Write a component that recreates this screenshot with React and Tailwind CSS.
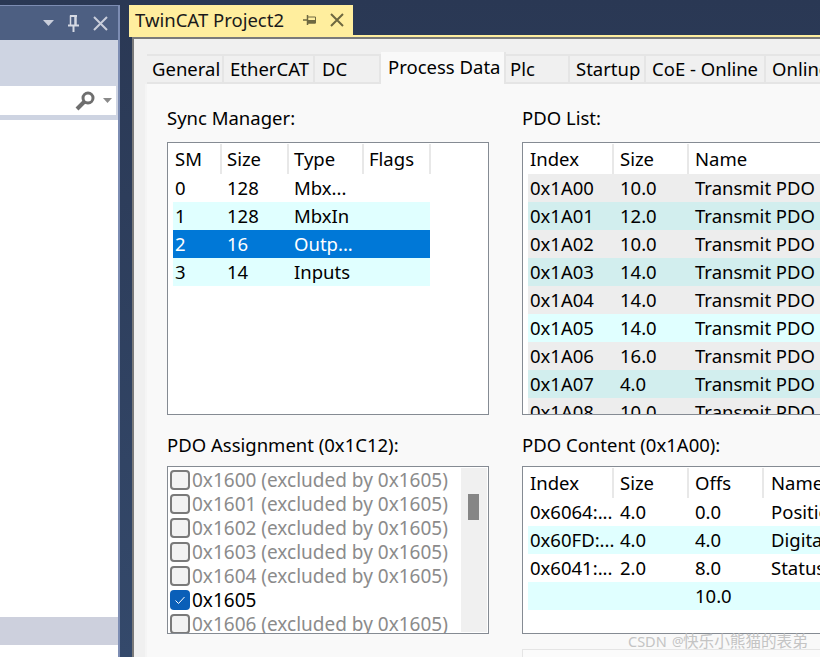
import React from 'react';

const font = { fontFamily: '"Noto Sans", "Noto Sans CJK SC", sans-serif' };

const tabs = [
  { label: 'General', width: 'w-[77px]', pad: 'pl-[5px]' },
  { label: 'EtherCAT', width: 'w-[91px]', pad: 'pl-[6px]' },
  { label: 'DC', width: 'w-[66px]', pad: 'pl-[7px]' },
  { label: 'Process Data', width: 'w-[125px]', pad: 'pl-[7px]', active: true },
  { label: 'Plc', width: 'w-[64px]', pad: 'pl-[4px]' },
  { label: 'Startup', width: 'w-[76px]', pad: 'pl-[6px]' },
  { label: 'CoE - Online', width: 'w-[120px]', pad: 'pl-[6px]' },
  { label: 'Online', width: 'w-[70px]', pad: 'pl-[6px]' },
];

const smRows = [
  ['0', '128', 'Mbx...', ''],
  ['1', '128', 'MbxIn', 'bg-[#e0ffff]'],
  ['2', '16', 'Outp...', 'bg-[#0078d7] text-white'],
  ['3', '14', 'Inputs', 'bg-[#e0ffff]'],
];

const pdoRows = [
  ['0x1A00', '10.0', 'bg-[#ededed]'],
  ['0x1A01', '12.0', 'bg-[#d2eeee]'],
  ['0x1A02', '10.0', 'bg-[#ededed]'],
  ['0x1A03', '14.0', 'bg-[#d2eeee]'],
  ['0x1A04', '14.0', 'bg-[#ededed]'],
  ['0x1A05', '14.0', 'bg-[#e0ffff]'],
  ['0x1A06', '16.0', 'bg-[#ededed]'],
  ['0x1A07', '4.0', 'bg-[#d2eeee]'],
  ['0x1A08', '10.0', 'bg-[#ededed]'],
];

const contentRows = [
  ['0x6064:...', '4.0', '0.0', 'Position', ''],
  ['0x60FD:...', '4.0', '4.0', 'Digital', 'bg-[#e0ffff]'],
  ['0x6041:...', '2.0', '8.0', 'Statusword', ''],
  ['', '', '10.0', '', 'bg-[#e0ffff]'],
];

const assignRows = ['0x1600', '0x1601', '0x1602', '0x1603', '0x1604', '0x1605', '0x1606'];

function Head({ label, width, pad = 'pl-[5px]', last }) {
  return (
    <div className={`${width} ${pad} h-[30px] shrink-0 flex items-center ${last ? '' : 'border-r-2 border-[#e8e8e8]'}`}>
      {label}
    </div>
  );
}

function Cell({ width, children, pad = 'pl-[5px]' }) {
  return <div className={`${width} ${pad} shrink-0 whitespace-nowrap overflow-hidden`}>{children}</div>;
}

function Checkbox({ checked }) {
  if (checked) {
    return (
      <div className="w-[20px] h-[20px] shrink-0 rounded-[4px] bg-[#0a5fb8] flex items-center justify-center">
        <svg width="12" height="12" viewBox="0 0 12 12" fill="none" stroke="#ffffff" strokeWidth="1">
          <path d="M1.5 6.5 L4.5 9.5 L10.5 3" />
        </svg>
      </div>
    );
  }
  return <div className="w-[20px] h-[20px] shrink-0 rounded-[4px] border-2 border-[#7a7a7a] bg-[#f2f2f2]" />;
}

function TitleIcons() {
  return (
    <div className="flex items-center h-full">
      <svg className="ml-[43px]" width="11" height="6" viewBox="0 0 11 6"><path d="M0 0 H11 L5.5 6 Z" fill="#c9cedb" /></svg>
      <svg className="ml-[14px]" width="11" height="17" viewBox="0 0 11 17" fill="none" stroke="#d5d9e3">
        <path d="M2.5 0.5 V10" strokeWidth="1.5" />
        <path d="M7.5 0.5 V10" strokeWidth="2.5" />
        <path d="M2 1 H9" strokeWidth="2" />
        <path d="M0 10.5 H11" strokeWidth="2" />
        <path d="M5.5 11 V17" strokeWidth="2" />
      </svg>
      <svg className="ml-[14px]" width="15" height="15" viewBox="0 0 15 15" fill="none" stroke="#c9cedb" strokeWidth="2">
        <path d="M1 1 L14 14 M14 1 L1 14" />
      </svg>
    </div>
  );
}

export default function App() {
  return (
    <div className="w-[820px] h-[657px] overflow-hidden flex bg-linear-to-b from-[#2a3854] to-[#34496b] text-[18.5px] leading-[28px] text-black relative" style={font}>
      {/* left tool window */}
      <div className="w-[120px] shrink-0 mt-[5px] flex flex-col border-r-2 border-[#7d8db3] bg-white">
        <div className="h-[35px] shrink-0 bg-[#4d5f82] border-t border-[#7d8db3]">
          <TitleIcons />
        </div>
        <div className="h-[46px] shrink-0 bg-[#ced4e2]" />
        <div className="h-[34px] shrink-0 bg-white border-b-[5px] border-r-2 border-[#ced4e2] flex items-center justify-end pr-[4px]">
          <svg width="20" height="20" viewBox="0 0 20 20" fill="none" stroke="#6e6e6e">
            <circle cx="13" cy="7" r="5" strokeWidth="3" />
            <path d="M9.5 10.5 L2 18" strokeWidth="4" />
          </svg>
          <svg className="ml-[8px]" width="9" height="5" viewBox="0 0 9 5"><path d="M0 0 H9 L4.5 5 Z" fill="#8a8a8a" /></svg>
        </div>
        <div className="h-[497px] shrink-0 bg-white" />
        <div className="h-[28px] shrink-0 bg-[#cdd0dd]" />
        <div className="flex-1 bg-white" />
      </div>

      {/* document well */}
      <div className="flex-1 min-w-0 ml-[9px] flex flex-col pt-[5px]">
        <div className="h-[30px] w-[224px] shrink-0 bg-[#ffee9e] flex items-center pl-[6px] text-[#1a1a1a] whitespace-nowrap">
          <span className="w-[168px] shrink-0">TwinCAT Project2</span>
          <svg width="13" height="10" viewBox="0 0 13 10" fill="#6e6840" stroke="#6e6840">
            <path d="M0 5 H5" strokeWidth="1.5" fill="none" />
            <path d="M4.5 0 V10" strokeWidth="1.5" fill="none" />
            <path d="M5 2 H12.5 V8 H5" strokeWidth="1" fill="none" />
            <path d="M5 5.5 H12.5 V8 H5 Z" strokeWidth="1" />
          </svg>
          <svg className="ml-[14px]" width="14" height="14" viewBox="0 0 14 14" fill="none" stroke="#6e6840" strokeWidth="2">
            <path d="M1 1 L13 13 M13 1 L1 13" />
          </svg>
        </div>
        <div className="h-[2px] shrink-0 bg-[#ffee9e]" />

        <div className="flex-1 ml-[3px] border-l-2 border-t-2 border-[#7a7a7a] bg-[#f0f0f0] flex flex-col min-h-0">
          {/* tab strip */}
          <div className="h-[45px] shrink-0 pl-[13px] flex items-end whitespace-nowrap">
            {tabs.map((t) =>
              t.active ? (
                <div key={t.label} className={`${t.width} ${t.pad} h-[32px] shrink-0 bg-[#f9f9f9] border-r-2 border-[#e5e5e5] leading-[30px]`}>
                  {t.label}
                </div>
              ) : (
                <div key={t.label} className={`${t.width} ${t.pad} h-[30px] shrink-0 border-t-2 border-r-2 border-b-2 border-[#e5e5e5] leading-[26px] overflow-hidden`}>
                  {t.label}
                </div>
              )
            )}
          </div>

          {/* page */}
          <div className="flex-1 ml-[11px] bg-[#f9f9f9] border-l-2 border-[#f5f5f5] min-h-0 overflow-hidden pl-[20px] pt-[20px] flex gap-[33px]">
            <div className="w-[322px] shrink-0 flex flex-col">
              <div className="h-[28px] shrink-0">Sync Manager:</div>
              <div className="mt-[10px] h-[273px] shrink-0 border border-[#858b93] bg-white pl-[5px] pt-[1px] overflow-hidden">
                <div className="flex">
                  <Head label="SM" width="w-[49px]" pad="pl-[2px]" />
                  <Head label="Size" width="w-[67px]" />
                  <Head label="Type" width="w-[75px]" />
                  <Head label="Flags" width="w-[67px]" />
                </div>
                {smRows.map(([sm, size, type, cls]) => (
                  <div key={sm} className={`flex w-[257px] h-[28px] ${cls}`}>
                    <Cell width="w-[49px]" pad="pl-[2px]">{sm}</Cell>
                    <Cell width="w-[67px]">{size}</Cell>
                    <Cell width="w-[75px]">{type}</Cell>
                  </div>
                ))}
              </div>

              <div className="mt-[16px] h-[28px] shrink-0">PDO Assignment (0x1C12):</div>
              <div className="mt-[7px] h-[168px] shrink-0 border border-[#858b93] bg-white flex overflow-hidden">
                <div className="flex-1 min-w-0 pl-[2px] pt-[1px] overflow-hidden">
                  {assignRows.map((id) => {
                    const on = id === '0x1605';
                    return (
                      <div key={id} className="h-[24px] flex items-center whitespace-nowrap text-[19px]">
                        <Checkbox checked={on} />
                        <span className={on ? 'ml-[2px] text-black' : 'ml-[2px] text-[#8b8b8b]'}>
                          {on ? id : `${id} (excluded by 0x1605)`}
                        </span>
                      </div>
                    );
                  })}
                </div>
                <div className="w-[26px] shrink-0 bg-[#f0f0f0] pt-[26px] pl-[7px] my-[1px] mr-[1px]">
                  <div className="w-[11px] h-[26px] bg-[#868686]" />
                </div>
              </div>
            </div>

            <div className="w-[320px] shrink-0 flex flex-col">
              <div className="h-[28px] shrink-0">PDO List:</div>
              <div className="mt-[10px] h-[273px] shrink-0 border border-[#858b93] border-r-0 bg-white pl-[5px] pt-[1px] overflow-hidden">
                <div className="flex">
                  <Head label="Index" width="w-[86px]" pad="pl-[2px]" />
                  <Head label="Size" width="w-[75px]" pad="pl-[6px]" />
                  <Head label="Name" width="w-[160px]" pad="pl-[6px]" last />
                </div>
                {pdoRows.map(([id, size, cls]) => (
                  <div key={id} className={`flex h-[28px] ${cls}`}>
                    <Cell width="w-[86px]" pad="pl-[2px]">{id}</Cell>
                    <Cell width="w-[75px]" pad="pl-[6px]">{size}</Cell>
                    <Cell width="w-[160px]" pad="pl-[6px]">Transmit PDO</Cell>
                  </div>
                ))}
              </div>

              <div className="mt-[16px] h-[28px] shrink-0">PDO Content (0x1A00):</div>
              <div className="mt-[7px] h-[168px] shrink-0 border border-[#858b93] border-r-0 bg-white pl-[5px] pt-[1px] overflow-hidden">
                <div className="flex">
                  <Head label="Index" width="w-[86px]" pad="pl-[2px]" />
                  <Head label="Size" width="w-[75px]" pad="pl-[6px]" />
                  <Head label="Offs" width="w-[75px]" pad="pl-[6px]" />
                  <Head label="Name" width="w-[85px]" pad="pl-[7px]" last />
                </div>
                {contentRows.map(([id, size, offs, name, cls], i) => (
                  <div key={i} className={`flex h-[28px] ${cls}`}>
                    <Cell width="w-[86px]" pad="pl-[2px]">{id}</Cell>
                    <Cell width="w-[75px]" pad="pl-[6px]">{size}</Cell>
                    <Cell width="w-[75px]" pad="pl-[6px]">{offs}</Cell>
                    <Cell width="w-[85px]" pad="pl-[7px]">{name}</Cell>
                  </div>
                ))}
              </div>
              <div className="mt-[15px] h-[20px] shrink-0 border border-[#e5e5e5] bg-[#fbfbfb]" />
            </div>
          </div>
        </div>
      </div>

      {/* CSDN watermark */}
      <div className="absolute left-[628px] top-[629px] flex items-center text-[15.6px] leading-[24px] text-[#c4c4c4] whitespace-nowrap">
        <span className="text-[14.5px] w-[44px] shrink-0">CSDN</span>
        <span className="text-[13px] w-[11px] shrink-0">@</span>
        <span>快乐小熊猫的表弟</span>
      </div>
    </div>
  );
}
